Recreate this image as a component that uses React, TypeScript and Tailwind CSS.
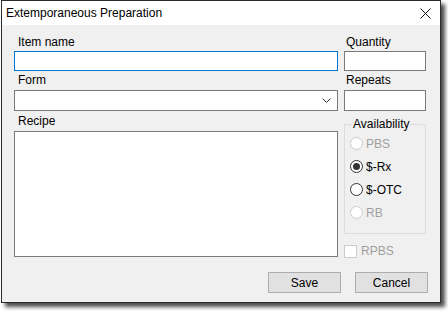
import React from 'react';

const font = { fontFamily: '"Liberation Sans", Arial, sans-serif' };

function Radio({ label, checked, disabled }: { label: string; checked?: boolean; disabled?: boolean }) {
  return (
    <div className="flex items-center h-[23px]">
      <div
        className={`w-[13px] h-[13px] rounded-full border bg-white flex items-center justify-center ${
          disabled ? 'border-[#cccccc]' : 'border-[#333333]'
        }`}
      >
        {checked && <div className="w-[7px] h-[7px] rounded-full bg-[#333333]" />}
      </div>
      <span className={`ml-[3px] text-[12px] leading-[14px] ${disabled ? 'text-[#a0a0a0]' : 'text-black'}`}>{label}</span>
    </div>
  );
}

export default function App() {
  return (
    <div className="w-[448px] h-[311px] bg-white pl-[1px]" style={font}>
      <div className="w-[440px] h-[303px] border border-[#2b2b2b] bg-[#f0f0f0] flex flex-col shadow-[4px_4px_4px_rgba(0,0,0,0.7)]">
        {/* title bar */}
        <div className="h-[24px] bg-white flex items-center justify-between pl-[4px] pr-[9px]">
          <span className="text-[12px] leading-[14px] text-black">Extemporaneous Preparation</span>
          <svg width="11" height="11" viewBox="0 0 11 11">
            <path d="M0.5 0.5 L10.5 10.5 M10.5 0.5 L0.5 10.5" stroke="#111" strokeWidth="1" />
          </svg>
        </div>

        <div className="flex-1 flex flex-col pl-[12px] pr-[12px]">
          <div className="flex gap-[6px]">
            {/* left column */}
            <div className="w-[324px] flex flex-col">
              <div className="h-[26px] flex items-end pl-[4px] pb-[2px] text-[12px] leading-[14px] text-black">Item name</div>
              <div className="h-[20px] border border-[#0078d7] bg-white" />
              <div className="h-[19px] flex items-end pl-[4px] pb-[3px] text-[12px] leading-[14px] text-black">Form</div>
              <div className="h-[21px] border border-[#7a7a7a] bg-white flex items-center justify-end pr-[6px]">
                <svg width="9" height="6" viewBox="0 0 9 6">
                  <path d="M0.5 0.5 L4.5 4.5 L8.5 0.5" fill="none" stroke="#333" strokeWidth="1" />
                </svg>
              </div>
              <div className="h-[20px] flex items-end pl-[4px] pb-[3px] text-[12px] leading-[14px] text-black">Recipe</div>
              <div className="h-[126px] border border-[#7a7a7a] bg-white" />
            </div>

            {/* right column */}
            <div className="w-[82px] flex flex-col">
              <div className="h-[26px] flex items-end pl-[2px] pb-[2px] text-[12px] leading-[14px] text-black">Quantity</div>
              <div className="h-[20px] border border-[#7a7a7a] bg-white" />
              <div className="h-[19px] flex items-end pl-[2px] pb-[3px] text-[12px] leading-[14px] text-black">Repeats</div>
              <div className="h-[21px] border border-[#7a7a7a] bg-white" />
              <div className="mt-[13px] h-[110px] border border-[#dcdcdc] relative pl-[5px] pt-[7px]">
                <span className="absolute left-[7px] top-[-8px] px-[1px] bg-[#f0f0f0] text-[12px] leading-[14px] text-black">
                  Availability
                </span>
                <Radio label="PBS" disabled />
                <Radio label="$-Rx" checked />
                <Radio label="$-OTC" />
                <Radio label="RB" disabled />
              </div>
              <div className="mt-[10px] flex items-center">
                <div className="w-[13px] h-[13px] border border-[#cccccc] bg-white" />
                <span className="ml-[4px] text-[12px] leading-[14px] text-[#a0a0a0]">RPBS</span>
              </div>
            </div>
          </div>

          <div className="mt-[14px] flex justify-end gap-[14px]">
            <button className="w-[73px] h-[21px] border border-[#adadad] bg-[#e1e1e1] text-[12px] leading-[14px] text-black">Save</button>
            <button className="w-[73px] h-[21px] border border-[#adadad] bg-[#e1e1e1] text-[12px] leading-[14px] text-black">Cancel</button>
          </div>
        </div>
      </div>
    </div>
  );
}
